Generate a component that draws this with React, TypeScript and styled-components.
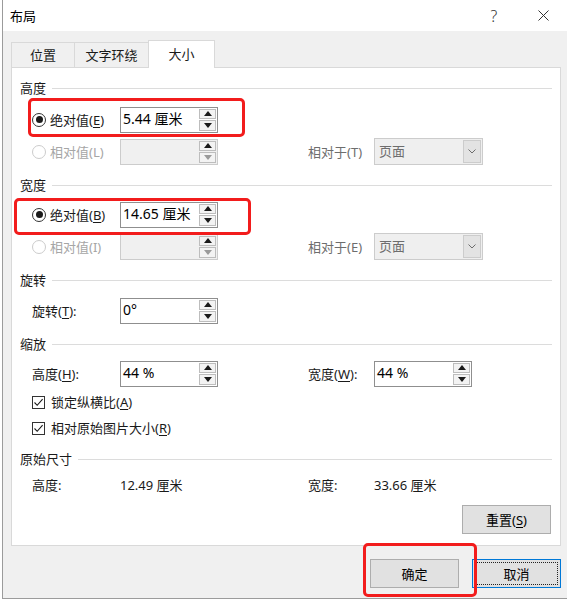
import React from 'react';
import styled, { createGlobalStyle } from 'styled-components';

const GlobalStyle = createGlobalStyle`
  html, body { margin: 0; padding: 0; background: #fff; }
  body {
    font-family: "Noto Sans", "Noto Sans CJK SC", sans-serif;
    font-size: 13px;
    color: #1a1a1a;
  }
  * { box-sizing: border-box; }
`;

const Dialog = styled.div`
  margin-left: 2px;
  width: 565px;
  height: 599px;
  border-left: 1px solid #9b9b9b;
  border-bottom: 1px solid #9b9b9b;
  background: #f0f0f0;
  display: flex;
  flex-direction: column;
`;

const TitleBar = styled.div`
  height: 31px;
  flex: none;
  background: #fff;
  display: flex;
  align-items: center;
  padding-left: 7px;
  padding-right: 1px;
  gap: 3px;
`;

const Title = styled.div`
  flex: 1;
  color: #000;
  line-height: 18px;
`;

const TitleButton = styled.div`
  width: 46px;
  height: 31px;
  display: flex;
  align-items: center;
  justify-content: center;
  color: #333;
  font-size: 16px;
  font-weight: 300;
`;

const Body = styled.div`
  flex: 1;
  padding: 9px 6px 0 8px;
  display: flex;
  flex-direction: column;
`;

const TabRow = styled.div`
  height: 28px;
  display: flex;
  align-items: flex-end;
  margin-bottom: -1px;
`;

const Tab = styled.div<{ $active?: boolean; $w: number }>`
  width: ${(p) => p.$w}px;
  height: ${(p) => (p.$active ? 28 : 26)}px;
  margin-left: -1px;
  display: flex;
  align-items: center;
  justify-content: center;
  padding-bottom: ${(p) => (p.$active ? 2 : 1)}px;
  border: 1px solid #d9d9d9;
  border-bottom: ${(p) => (p.$active ? 'none' : '1px solid #d9d9d9')};
  background: ${(p) => (p.$active ? '#fff' : '#f0f0f0')};
  color: #1a1a1a;
  position: ${(p) => (p.$active ? 'relative' : 'static')};
  z-index: ${(p) => (p.$active ? 1 : 0)};
  &:first-child { margin-left: 0; }
`;

const Panel = styled.div`
  height: 479px;
  border: 1px solid #d9d9d9;
  background: #fff;
  padding: 11px 8px 0 8px;
`;

const Section = styled.div<{ $mt: number }>`
  margin-top: ${(p) => p.$mt}px;
`;

const GroupHeader = styled.div`
  height: 18px;
  line-height: 18px;
  display: flex;
  align-items: center;
  color: #1a1a1a;
`;

const Rule = styled.div`
  flex: 1;
  height: 1px;
  background: #dcdcdc;
  margin-left: 6px;
`;

const Row = styled.div<{ $mt: number; $h?: number }>`
  position: relative;
  margin-top: ${(p) => p.$mt}px;
  margin-left: 12px;
  height: ${(p) => p.$h ?? 25}px;
  display: flex;
  align-items: center;
`;

const LabelCell = styled.div<{ $disabled?: boolean }>`
  width: 88px;
  flex: none;
  display: flex;
  align-items: center;
  gap: 4px;
  color: ${(p) => (p.$disabled ? '#a6a6a6' : '#1a1a1a')};
  line-height: 18px;
  white-space: nowrap;
`;

const SecondLabel = styled.div<{ $muted?: boolean }>`
  width: 66px;
  margin-left: 90px;
  flex: none;
  color: ${(p) => (p.$muted ? '#6d6d6d' : '#1a1a1a')};
  line-height: 18px;
  white-space: nowrap;
`;

const Key = styled.span`
  text-decoration: underline;
  text-underline-offset: 2px;
`;

const RadioCircle = styled.span<{ $checked?: boolean; $disabled?: boolean }>`
  width: 14px;
  height: 14px;
  flex: none;
  border-radius: 50%;
  border: 1px solid ${(p) => (p.$disabled ? '#cccccc' : '#333')};
  background: #fff;
  display: flex;
  align-items: center;
  justify-content: center;
  &::after {
    content: '';
    width: 7px;
    height: 7px;
    border-radius: 50%;
    background: ${(p) => (p.$checked ? '#1a1a1a' : 'transparent')};
  }
`;

const InputBox = styled.div<{ $disabled?: boolean }>`
  width: 98px;
  height: 26px;
  flex: none;
  border: 1px solid ${(p) => (p.$disabled ? '#cccccc' : '#8f8f8f')};
  background: ${(p) => (p.$disabled ? '#f0f0f0' : '#fff')};
  display: flex;
  padding: 1px 1px 1px 0;
`;

const InputText = styled.div`
  flex: 1;
  padding-left: 2px;
  padding-top: 1px;
  font-size: 14px;
  line-height: 18px;
  color: #000;
  white-space: nowrap;
`;

const SpinCol = styled.div`
  width: 17px;
  display: flex;
  flex-direction: column;
  gap: 1px;
`;

const SpinButton = styled.div`
  flex: 1;
  border: 1px solid #bdbdbd;
  background: #f3f3f3;
  display: flex;
  align-items: center;
  justify-content: center;
`;

const SelectBox = styled.div`
  width: 109px;
  height: 27px;
  flex: none;
  border: 1px solid #cccccc;
  background: #efefef;
  display: flex;
  padding: 1px;
`;

const SelectText = styled.div`
  flex: 1;
  padding-left: 3px;
  line-height: 22px;
  color: #6d6d6d;
`;

const DropButton = styled.div`
  width: 18px;
  background: #e3e3e3;
  border: 1px solid #cccccc;
  display: flex;
  align-items: center;
  justify-content: center;
`;

const CheckBox = styled.span`
  width: 13px;
  height: 13px;
  flex: none;
  border: 1px solid #333;
  background: #fff;
  display: flex;
  align-items: center;
  justify-content: center;
`;

const CheckLabel = styled.div`
  display: flex;
  align-items: center;
  gap: 6px;
  line-height: 18px;
`;

const ValueCell = styled.div<{ $w: number }>`
  width: ${(p) => p.$w}px;
  flex: none;
  line-height: 18px;
  white-space: nowrap;
`;

const ButtonRow = styled.div<{ $mt: number }>`
  margin-top: ${(p) => p.$mt}px;
  display: flex;
  justify-content: flex-end;
  gap: 13px;
  padding-right: 1px;
`;

const PushButton = styled.div<{ $focused?: boolean }>`
  position: relative;
  width: 89px;
  height: 29px;
  display: flex;
  align-items: center;
  justify-content: center;
  background: #e1e1e1;
  border: 1px solid ${(p) => (p.$focused ? '#0078d7' : '#adadad')};
  color: #000;
  line-height: 18px;
  &::after {
    content: '';
    display: ${(p) => (p.$focused ? 'block' : 'none')};
    position: absolute;
    inset: 2px;
    border: 1px dotted #222;
  }
`;

const Footer = styled.div`
  margin-top: 13px;
  display: flex;
  justify-content: flex-end;
  gap: 13px;
`;

const ButtonWrap = styled.div`
  position: relative;
`;

const Highlight = styled.div<{ $l: number; $t: number; $w: number; $h: number }>`
  position: absolute;
  left: ${(p) => p.$l}px;
  top: ${(p) => p.$t}px;
  width: ${(p) => p.$w}px;
  height: ${(p) => p.$h}px;
  border: 3px solid #f21c1c;
  border-radius: 5px;
  pointer-events: none;
  z-index: 2;
`;

function Arrow({ up, color }: { up?: boolean; color: string }) {
  return (
    <svg width="8" height="5" viewBox="0 0 8 5">
      <polygon points={up ? '0,5 8,5 4,0' : '0,0 8,0 4,5'} fill={color} />
    </svg>
  );
}

function SpinInput({ value, disabled }: { value?: string; disabled?: boolean }) {
  return (
    <InputBox $disabled={disabled}>
      <InputText>{value}</InputText>
      <SpinCol>
        <SpinButton>
          <Arrow up color="#1a1a1a" />
        </SpinButton>
        <SpinButton>
          <Arrow color={disabled ? '#9a9a9a' : '#1a1a1a'} />
        </SpinButton>
      </SpinCol>
    </InputBox>
  );
}

function Select({ value }: { value: string }) {
  return (
    <SelectBox>
      <SelectText>{value}</SelectText>
      <DropButton>
        <svg width="8" height="5" viewBox="0 0 8 5">
          <polyline points="0.5,0.5 4,4 7.5,0.5" fill="none" stroke="#6d6d6d" strokeWidth="1" />
        </svg>
      </DropButton>
    </SelectBox>
  );
}

function Header({ children }: { children: React.ReactNode }) {
  return (
    <GroupHeader>
      {children}
      <Rule />
    </GroupHeader>
  );
}

function Check({ children }: { children: React.ReactNode }) {
  return (
    <CheckLabel>
      <CheckBox>
        <svg width="11" height="11" viewBox="0 0 11 11">
          <polyline points="1.5,5.5 4.2,8.3 9.6,2.2" fill="none" stroke="#1a1a1a" strokeWidth="1.1" />
        </svg>
      </CheckBox>
      <span>{children}</span>
    </CheckLabel>
  );
}

export default function App() {
  return (
    <>
      <GlobalStyle />
      <Dialog>
        <TitleBar>
          <Title>布局</Title>
          <TitleButton>?</TitleButton>
          <TitleButton>
            <svg width="11" height="11" viewBox="0 0 11 11">
              <path d="M0.5 0.5 L10.5 10.5 M10.5 0.5 L0.5 10.5" stroke="#333" strokeWidth="1" />
            </svg>
          </TitleButton>
        </TitleBar>
        <Body>
          <TabRow>
            <Tab $w={64}>位置</Tab>
            <Tab $w={75}>文字环绕</Tab>
            <Tab $w={67} $active>
              大小
            </Tab>
          </TabRow>
          <Panel>
            <Section $mt={0}>
              <Header>高度</Header>
              <Row $mt={10}>
                <Highlight $l={-4} $t={-9} $w={217} $h={39} />
                <LabelCell>
                  <RadioCircle $checked />
                  <span>
                    绝对值(<Key>E</Key>)
                  </span>
                </LabelCell>
                <SpinInput value="5.44 厘米" />
              </Row>
              <Row $mt={7}>
                <LabelCell $disabled>
                  <RadioCircle $disabled />
                  <span>相对值(L)</span>
                </LabelCell>
                <SpinInput disabled />
                <SecondLabel $muted>相对于(T)</SecondLabel>
                <Select value="页面" />
              </Row>
            </Section>

            <Section $mt={12}>
              <Header>宽度</Header>
              <Row $mt={8}>
                <Highlight $l={-18} $t={-4} $w={237} $h={37} />
                <LabelCell>
                  <RadioCircle $checked />
                  <span>
                    绝对值(<Key>B</Key>)
                  </span>
                </LabelCell>
                <SpinInput value="14.65 厘米" />
              </Row>
              <Row $mt={7}>
                <LabelCell $disabled>
                  <RadioCircle $disabled />
                  <span>相对值(I)</span>
                </LabelCell>
                <SpinInput disabled />
                <SecondLabel $muted>相对于(E)</SecondLabel>
                <Select value="页面" />
              </Row>
            </Section>

            <Section $mt={12}>
              <Header>旋转</Header>
              <Row $mt={9}>
                <LabelCell>
                  <span>
                    旋转(<Key>T</Key>):
                  </span>
                </LabelCell>
                <SpinInput value="0°" />
              </Row>
            </Section>

            <Section $mt={12}>
              <Header>缩放</Header>
              <Row $mt={8}>
                <LabelCell>
                  <span>
                    高度(<Key>H</Key>):
                  </span>
                </LabelCell>
                <SpinInput value="44 %" />
                <SecondLabel>
                  宽度(<Key>W</Key>):
                </SecondLabel>
                <SpinInput value="44 %" />
              </Row>
              <Row $mt={7} $h={18}>
                <Check>
                  锁定纵横比(<Key>A</Key>)
                </Check>
              </Row>
              <Row $mt={8} $h={18}>
                <Check>
                  相对原始图片大小(<Key>R</Key>)
                </Check>
              </Row>
            </Section>

            <Section $mt={13}>
              <Header>原始尺寸</Header>
              <Row $mt={8} $h={18}>
                <ValueCell $w={88}>高度:</ValueCell>
                <ValueCell $w={188}>12.49 厘米</ValueCell>
                <ValueCell $w={66}>宽度:</ValueCell>
                <ValueCell $w={100}>33.66 厘米</ValueCell>
              </Row>
              <ButtonRow $mt={11}>
                <PushButton>
                  重置(<Key>S</Key>)
                </PushButton>
              </ButtonRow>
            </Section>
          </Panel>
          <Footer>
            <ButtonWrap>
              <Highlight $l={-7} $t={-16} $w={114} $h={54} />
              <PushButton>确定</PushButton>
            </ButtonWrap>
            <PushButton $focused>取消</PushButton>
          </Footer>
        </Body>
      </Dialog>
    </>
  );
}
